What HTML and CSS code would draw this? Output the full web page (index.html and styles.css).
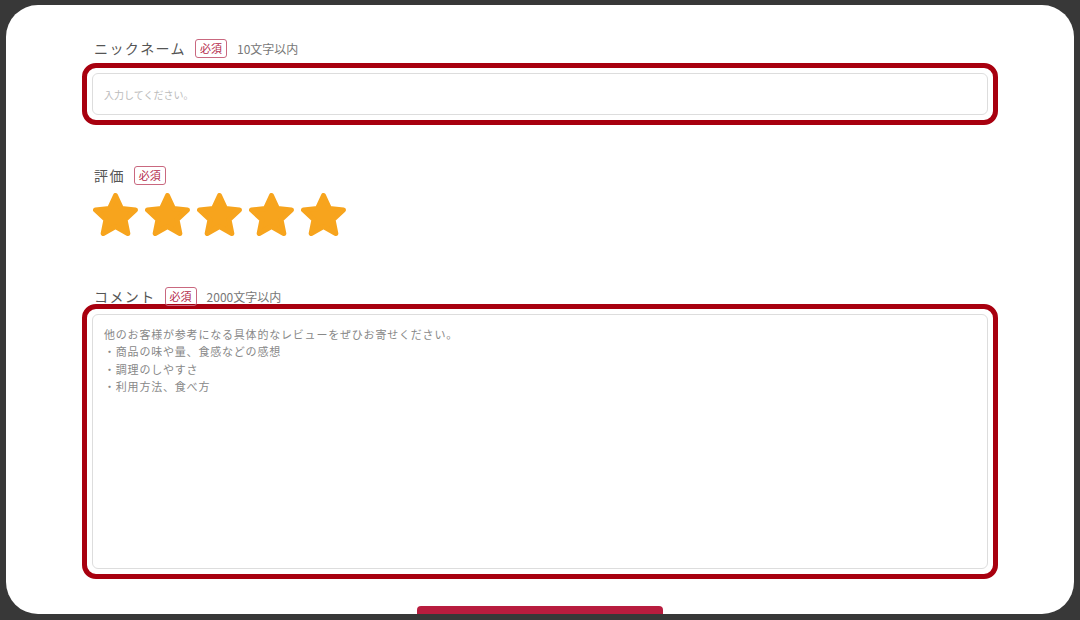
FILE: index.html
```html
<!DOCTYPE html>
<html lang="ja">
<head>
    <meta charset="UTF-8">
    <meta name="viewport" content="width=device-width, initial-scale=1.0">
    <title>レビューを書く</title>
    <link rel="stylesheet" href="styles.css">
</head>
<body>

    <div class="panel">
        <form class="review-form">

            <!-- Nickname -->
            <div class="field-head">
                <span class="field-label">ニックネーム</span>
                <span class="badge">必須</span>
                <span class="field-note">10文字以内</span>
            </div>
            <div class="focus-ring">
                <input type="text" class="text-input" placeholder="入力してください。">
            </div>

            <!-- Rating -->
            <div class="field-head rating-head">
                <span class="field-label">評価</span>
                <span class="badge">必須</span>
            </div>
            <div class="stars">
                <svg class="star" viewBox="0 0 45 43"><polygon points="22.5,2.5 28.38,15.41 42.47,17.01 32.01,26.59 34.84,40.49 22.5,33.5 10.16,40.49 12.99,26.59 2.53,17.01 16.62,15.41"/></svg>
                <svg class="star" viewBox="0 0 45 43"><polygon points="22.5,2.5 28.38,15.41 42.47,17.01 32.01,26.59 34.84,40.49 22.5,33.5 10.16,40.49 12.99,26.59 2.53,17.01 16.62,15.41"/></svg>
                <svg class="star" viewBox="0 0 45 43"><polygon points="22.5,2.5 28.38,15.41 42.47,17.01 32.01,26.59 34.84,40.49 22.5,33.5 10.16,40.49 12.99,26.59 2.53,17.01 16.62,15.41"/></svg>
                <svg class="star" viewBox="0 0 45 43"><polygon points="22.5,2.5 28.38,15.41 42.47,17.01 32.01,26.59 34.84,40.49 22.5,33.5 10.16,40.49 12.99,26.59 2.53,17.01 16.62,15.41"/></svg>
                <svg class="star" viewBox="0 0 45 43"><polygon points="22.5,2.5 28.38,15.41 42.47,17.01 32.01,26.59 34.84,40.49 22.5,33.5 10.16,40.49 12.99,26.59 2.53,17.01 16.62,15.41"/></svg>
            </div>

            <!-- Comment -->
            <div class="field-head comment-head">
                <span class="field-label">コメント</span>
                <span class="badge">必須</span>
                <span class="field-note">2000文字以内</span>
            </div>
            <div class="focus-ring comment-ring">
                <textarea class="text-area" placeholder="他のお客様が参考になる具体的なレビューをぜひお寄せください。&#10;・商品の味や量、食感などの感想&#10;・調理のしやすさ&#10;・利用方法、食べ方"></textarea>
            </div>

            <!-- Submit (mostly hidden below the fold) -->
            <button type="button" class="submit" aria-label="投稿する"></button>
        </form>
    </div>

</body>
</html>
```

FILE: styles.css
```css
* {
    box-sizing: border-box;
}

html, body {
    height: 100%;
}

body {
    margin: 0;
    padding: 5px 6px 6px;
    background-color: #383838;
    font-family: "Noto Sans CJK JP", "Noto Sans", sans-serif;
    color: #555;
}

.panel {
    height: 100%;
    background-color: #fff;
    border-radius: 32px;
    overflow: hidden;
}

.review-form {
    width: 916px;
    margin: 0 auto;
    padding-top: 33px;
}

.field-head {
    display: flex;
    align-items: center;
    height: 20px;
    padding-left: 12px;
}

.rating-head {
    margin-top: 40px;
}

.comment-head {
    margin-top: 50px;
}

.field-label {
    font-size: 14px;
    letter-spacing: 1.4px;
    color: #555;
    margin-right: 9px;
}

.badge {
    display: inline-block;
    height: 19px;
    line-height: 17px;
    padding: 0 4px;
    font-size: 11px;
    color: #b42a4a;
    border: 1px solid #c9687f;
    border-radius: 3px;
    margin-right: 10px;
}

.field-note {
    font-size: 12px;
    color: #777;
}

.focus-ring {
    margin-top: 5px;
    padding: 5px;
    border: 5px solid #a8000f;
    border-radius: 14px;
}

.comment-ring {
    margin-top: -2px;
}

.text-input,
.text-area {
    display: block;
    width: 100%;
    border: 1px solid #ddd;
    border-radius: 6px;
    font-family: inherit;
    background-color: #fff;
    outline: none;
}

.text-input {
    height: 42px;
    padding: 0 11px;
    font-size: 10px;
}

.text-input::placeholder {
    color: #bbb;
}

.text-area {
    height: 255px;
    padding: 11px 11px;
    font-size: 11px;
    line-height: 17.3px;
    letter-spacing: 0.8px;
    resize: none;
}

.text-area::placeholder {
    color: #888;
}

.stars {
    display: flex;
    gap: 7px;
    margin-top: 8px;
    padding-left: 11px;
}

.star {
    width: 45px;
    height: 43px;
    fill: #f7a41d;
    stroke: #f7a41d;
    stroke-width: 5;
    stroke-linejoin: round;
}

.submit {
    display: block;
    width: 246px;
    height: 44px;
    margin: 27px auto 0;
    background-color: #b81c3e;
    border: none;
    border-radius: 4px;
}
```
